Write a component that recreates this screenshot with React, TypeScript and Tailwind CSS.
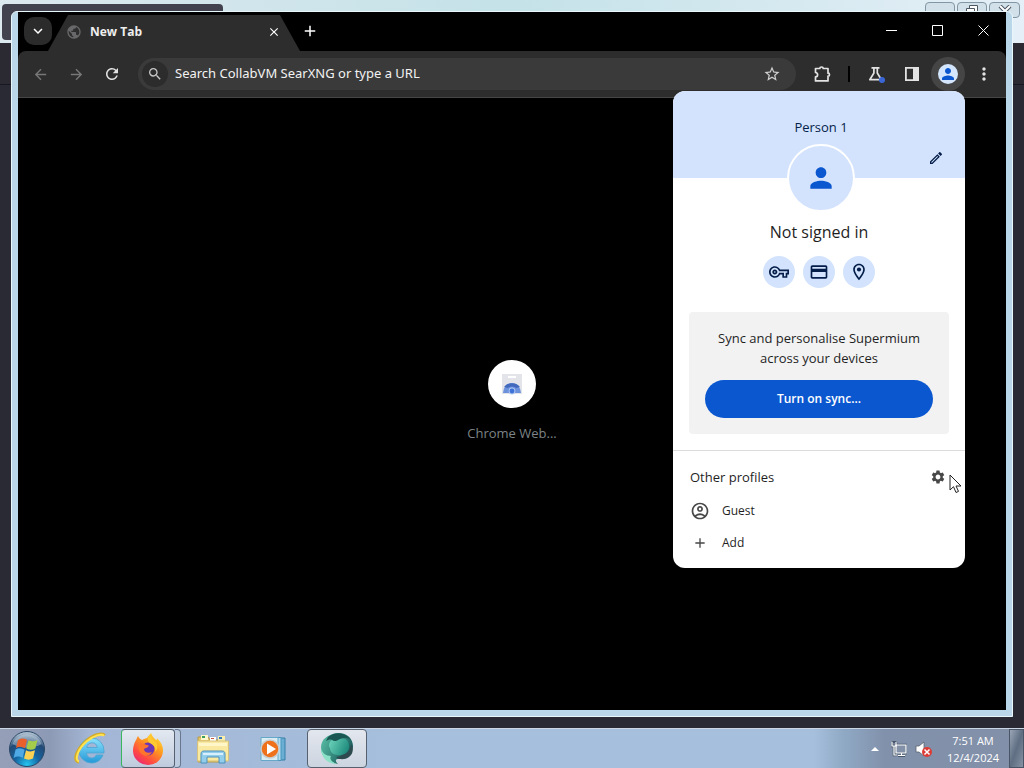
import type { ReactNode } from "react";
import {
  MdAdd,
  MdArrowBack,
  MdArrowForward,
  MdClose,
  MdKeyboardArrowDown,
  MdMoreVert,
  MdOutlineAccountCircle,
  MdOutlineCreditCard,
  MdOutlineEdit,
  MdOutlineLocationOn,
  MdOutlineVpnKey,
  MdPerson,
  MdPublic,
  MdRefresh,
  MdSearch,
  MdSettings,
  MdStarBorder,
} from "react-icons/md";

function ToolButton({ label, children }: { label: string; children: ReactNode }) {
  return (
    <button aria-label={label} className="flex h-9 w-9 shrink-0 items-center justify-center text-[18px] text-[#e3e3e3]">
      {children}
    </button>
  );
}

function CaptionButton({ label, children }: { label: string; children: ReactNode }) {
  return (
    <button aria-label={label} className="flex h-9 w-[46px] items-center justify-center">
      <svg viewBox="0 0 11 11" className="h-[11px] w-[11px]" fill="none" stroke="#fff" shapeRendering="geometricPrecision">
        {children}
      </svg>
    </button>
  );
}

function TabStrip() {
  return (
    <div className="flex h-[39px] items-center bg-black">
      <button aria-label="Search tabs" className="mb-px ml-1.5 flex h-7 w-7 items-center justify-center rounded-[10px] bg-[#2b2b2b] text-lg text-white">
        <MdKeyboardArrowDown />
      </button>
      <div className="-ml-1 flex h-full w-[252px] items-end pt-[3px]">
        <div className="flex h-9 w-full items-center bg-[#2d2d2d] pr-[19px] pb-0.5 pl-[18px] [clip-path:polygon(0_100%,20px_0,232px_0,100%_100%)]">
          <MdPublic className="h-4 w-4 text-[#68686a]" />
          <span className="ml-2 text-xs font-bold text-[#eeeeee]">New Tab</span>
          <button aria-label="Close tab" className="ml-auto text-sm text-white">
            <MdClose />
          </button>
        </div>
      </div>
      <button aria-label="New tab" className="mb-px ml-px text-lg text-white">
        <MdAdd />
      </button>
      <div className="mb-0.5 ml-auto flex">
        <CaptionButton label="Minimize">
          <path d="M0 5.5h11" />
        </CaptionButton>
        <CaptionButton label="Maximize">
          <path d="M.5.5h10v10H.5z" />
        </CaptionButton>
        <CaptionButton label="Close">
          <path d="m.5.5 10 10m0-10-10 10" />
        </CaptionButton>
      </div>
    </div>
  );
}

function Toolbar() {
  return (
    <div className="bg-black">
      <div className="flex h-[47px] items-center rounded-t-lg border-b border-[#464646] bg-[#2d2d2d] px-1">
        <div className="flex text-[#777777]">
          <button aria-label="Back" className="flex h-9 w-9 items-center justify-center text-[17px]">
            <MdArrowBack />
          </button>
          <button aria-label="Forward" className="flex h-9 w-9 items-center justify-center text-[17px]">
            <MdArrowForward />
          </button>
          <ToolButton label="Reload">
            <MdRefresh />
          </ToolButton>
        </div>
        <div className="mx-2 flex h-8 flex-1 items-center rounded-full bg-[#3a3a3a] pr-[15px] pl-1">
          <div className="flex h-[26px] w-[26px] items-center justify-center rounded-full bg-[#2c2c2c] text-base text-[#c7c7c7]">
            <MdSearch />
          </div>
          <input
            aria-label="Address and search bar"
            placeholder="Search CollabVM SearXNG or type a URL"
            className="ml-[7px] min-w-0 flex-1 bg-transparent font-['Noto_Sans',sans-serif] text-[13px] text-white outline-none placeholder:text-[#f2f2f2]"
          />
          <button aria-label="Bookmark this tab" className="text-[18px] text-[#d0d0d0]">
            <MdStarBorder />
          </button>
        </div>
        <ToolButton label="Extensions">
          <svg viewBox="0 0 18 18" className="h-[18px] w-[18px]" fill="none" stroke="#e3e3e3" strokeWidth="1.7" strokeLinejoin="round">
            <path d="M2.500 3.500h4.300a1.700 1.500 0 0 1 3.400 0h4.800v4.700a1.500 1.500 0 0 1 0 3v4.700H2.500v-4c2.800-.3 2.800-4.100 0-4.400z" />
          </svg>
        </ToolButton>
        <div className="flex w-[18px] justify-center">
          <div className="h-4 w-0.5 bg-black" />
        </div>
        <ToolButton label="Experiments">
          <span className="relative flex">
            <svg viewBox="0 0 18 18" className="h-[18px] w-[18px]" fill="none" stroke="#e3e3e3" strokeWidth="1.700" strokeLinejoin="round">
              <path d="M4.500 2.800h8M6.900 3v5L2.800 14.700h11.600L10.300 8V3" />
            </svg>
            <span className="absolute right-0 bottom-0 h-1.5 w-1.5 rounded-full bg-[#3a66d6]" />
          </span>
        </ToolButton>
        <ToolButton label="Side panel">
          <svg viewBox="0 0 16 16" className="h-4 w-4">
            <path d="M1.900 1.900h12.200v12.200H1.900z" fill="none" stroke="#e3e3e3" strokeWidth="1.800" />
            <path d="M9 2h5v12H9z" fill="#e3e3e3" />
          </svg>
        </ToolButton>
        <ToolButton label="Profile">
          <span className="flex h-[34px] w-[34px] items-center justify-center rounded-full bg-[#454545]">
            <span className="flex h-5 w-5 items-center justify-center rounded-full bg-[#d3e6fd] text-lg text-[#0b57d0]">
              <MdPerson />
            </span>
          </span>
        </ToolButton>
        <ToolButton label="Menu">
          <MdMoreVert className="h-5 w-5" />
        </ToolButton>
      </div>
    </div>
  );
}

function Feature({ children }: { children: ReactNode }) {
  return <span className="flex h-8 w-8 items-center justify-center rounded-full bg-[#d3e3fd] text-xl text-[#041e49]">{children}</span>;
}

function ProfileMenu() {
  return (
    <section className="absolute top-[91px] right-[59px] w-[292px] overflow-hidden rounded-xl bg-white text-[13px] text-[#1f1f1f]">
      <div className="relative h-[87px] bg-[#d3e3fd] pt-[26px] text-center text-[#041e49]">
        <p className="pl-1 leading-5">Person 1</p>
        <button aria-label="Edit profile" className="absolute right-[21px] bottom-3 text-base">
          <MdOutlineEdit />
        </button>
      </div>
      <div className="relative -mt-[34px] ml-1 flex justify-center">
        <span className="flex h-[68px] w-[68px] items-center justify-center rounded-full border-2 border-white bg-[#d3e3fd] text-[32px] text-[#0b57d0]">
          <MdPerson />
        </span>
      </div>
      <h2 className="mt-2 text-center text-base leading-6">Not signed in</h2>
      <div className="mt-3 flex justify-center gap-2">
        <Feature>
          <MdOutlineVpnKey />
        </Feature>
        <Feature>
          <MdOutlineCreditCard />
        </Feature>
        <Feature>
          <MdOutlineLocationOn />
        </Feature>
      </div>
      <div className="mx-4 mt-6 rounded bg-[#f2f2f2] p-4 text-center">
        <p className="px-2 leading-5">Sync and personalise Supermium across your devices</p>
        <button className="mt-3 h-[38px] w-full rounded-full bg-[#0b57d0] text-xs font-semibold text-white">Turn on sync...</button>
      </div>
      <div className="mt-4 border-t border-[#dcdcdc] pt-4 pb-[9px]">
        <div className="mb-2 flex items-center justify-between pr-[19px] pl-[17px] leading-5">
          <h3>Other profiles</h3>
          <button aria-label="Manage profiles" className="text-base text-[#474747]">
            <MdSettings />
          </button>
        </div>
        <button className="flex h-8 w-full items-center gap-3 pl-[17px] text-xs">
          <MdOutlineAccountCircle className="h-5 w-5 text-[#474747]" />
          Guest
        </button>
        <button className="flex h-8 w-full items-center gap-3 pl-[17px] text-xs">
          <MdAdd className="h-5 w-5 p-0.5 text-[#474747]" />
          Add
        </button>
      </div>
    </section>
  );
}

function BrowserWindow() {
  return (
    <section className="absolute inset-x-[11px] top-[11px] bottom-[11px] flex flex-col rounded-t-md border border-[#e9f6fb] bg-[#b9d7e8] px-1.5 pb-1.5">
      <div className="flex flex-1 flex-col bg-black">
        <TabStrip />
        <Toolbar />
        <main className="flex flex-1 flex-col items-center justify-center pb-1.5">
          <a href="#" className="flex flex-col items-center text-[13px] text-[#7d8386]">
            <span className="flex h-12 w-12 items-center justify-center rounded-full bg-white">
              <svg viewBox="0 0 22 22" className="h-[22px] w-[22px]">
                <path d="M1 1h20v20H1z" fill="#e3e4e9" />
                <path d="M7 3h8v2H7z" fill="#fff" />
                <path d="M2 20a9 10 0 0 1 18 0z" fill="#6c92dc" />
                <path d="M3 14a9 7 0 0 1 16 0l-4 1a5 4 0 0 0-8 0z" fill="#4169bd" />
                <circle cx="11" cy="18" r="3.4" fill="#a9c3f2" />
                <circle cx="11" cy="18" r="2.4" fill="#3d72d6" />
              </svg>
            </span>
            <span className="mt-[15px] leading-5">Chrome Web...</span>
          </a>
        </main>
      </div>
    </section>
  );
}

function BackgroundWindow() {
  return (
    <div className="flex flex-1 flex-col bg-[#292a33]">
      <div className="flex h-[43px] items-start justify-between bg-linear-to-r from-[#dce9ef] via-[#c4e2e8] to-[#e5eff7] pt-1 pr-1 pl-0.5">
        <div className="h-9 w-[221px] rounded bg-[#42424e]" />
        <div className="-mt-0.5 flex gap-0.5">
          <button aria-label="Minimize background window" className="h-4 w-[30px] rounded-sm border border-[#8296a3] bg-[#d1e0e9]" />
          <button aria-label="Restore background window" className="flex h-4 w-[30px] justify-center rounded-sm border border-[#8296a3] bg-[#d1e0e9]">
            <svg viewBox="0 0 12 12" className="mt-0.5 h-3 w-3" fill="#fff" stroke="#4c5864">
              <path d="M3.500.5h8v7h-8z" />
              <path d="M.5 3.500h8v7h-8z" />
            </svg>
          </button>
          <button aria-label="Close background window" className="flex h-4 w-[31px] justify-center rounded-sm border border-[#8296a3] bg-[#d1e0e9]">
            <svg viewBox="0 0 14 12" className="mt-0.5 h-3 w-3.5" fill="none">
              <path d="m2 1 10 10m0-10L2 11" stroke="#465363" strokeWidth="4" />
              <path d="m2 1 10 10m0-10L2 11" stroke="#fff" strokeWidth="2" />
            </svg>
          </button>
        </div>
      </div>
      <div className="h-[42px] border-b border-[#17181f] bg-[#2b2a33]" />
    </div>
  );
}

function StartOrb() {
  return (
    <svg viewBox="0 0 38 38" className="h-[38px] w-[38px]">
      <defs>
        <radialGradient id="orb" cx=".5" cy=".95" r=".9">
          <stop offset="0" stopColor="#25c6f0" />
          <stop offset=".4" stopColor="#1464a2" />
          <stop offset=".75" stopColor="#234a75" />
          <stop offset="1" stopColor="#aabdce" />
        </radialGradient>
      </defs>
      <circle cx="19" cy="19" r="17.5" fill="url(#orb)" stroke="#2a4868" />
      <path d="M4.500 14a15 13 0 0 1 29 0c-9 5-19 5-29 0z" fill="#d9e5ee" opacity=".4" />
      <path d="M10 10c3-2.200 6-2 9-.2l-2 8.400c-3-2-6-2-9-.2z" fill="#e8612c" />
      <path d="M20.500 10.200c3 1.600 6 1.500 9-.2l-2.200 8.600c-3 1.700-6 1.600-9-.1z" fill="#a3cd4b" />
      <path d="M7.600 19.400c3-1.700 6-1.600 9 .3l-2 8.200c-3-1.800-6-1.700-9 0z" fill="#4fa9e4" />
      <path d="M18 20.300c3 1.600 6 1.500 9 0l-2 8.200c-3 1.600-6 1.500-9 0z" fill="#fbd154" />
    </svg>
  );
}

function ExplorerLogo() {
  return (
    <svg viewBox="0 0 34 34" className="h-[34px] w-[34px]" fill="none">
      <defs>
        <linearGradient id="ie" x1="0" y1="0" x2="0" y2="1">
          <stop offset="0" stopColor="#8be1fb" />
          <stop offset="1" stopColor="#2499d8" />
        </linearGradient>
      </defs>
      <path d="M30 23c-2 5-6 8-11.500 8A12.500 12.500 0 1 1 31 18.500V21H13.500c.3 3.300 2.300 5 5.300 5 2 0 3.500-1 4.400-3zM13.700 15.500h10.500c-.3-3-2.200-4.700-5.100-4.700-3.100 0-5 1.700-5.400 4.700z" fill="url(#ie)" stroke="#4aa5d2" strokeWidth=".8" fillRule="evenodd" />
      <path d="M6 30C-1 29 4 17 13 9 21 2 30 .5 31.500 3.500" stroke="#d3ab2c" strokeWidth="3" />
      <path d="M6 29.500C1 28 5 17 13.500 9.500 21 3 29 1.500 31 3.800" stroke="#ffe34f" strokeWidth="2" />
    </svg>
  );
}

function FirefoxLogo() {
  return (
    <svg viewBox="0 0 34 34" className="h-[34px] w-[34px]">
      <defs>
        <linearGradient id="fox" x1=".9" y1="0" x2=".2" y2="1">
          <stop offset="0" stopColor="#ffeb3e" />
          <stop offset=".4" stopColor="#ff9a1f" />
          <stop offset=".75" stopColor="#ff4a42" />
          <stop offset="1" stopColor="#e8257b" />
        </linearGradient>
      </defs>
      <path d="M5 8c1-1 1-3 2-4 1 2 2 3 4 4 2-1 4-2 5-2 1-2 3-3 4-5 1 3 3 5 5 7 1 0 1-1 1-2 4 4 6 8 6 12a15 14.500 0 0 1-30 1c0-4 1-8 3-11z" fill="url(#fox)" />
      <circle cx="17" cy="17" r="6.500" fill="#6b35b5" />
      <path d="M8 12c3-1 5 0 8 1 2 0 2 1 1 2s-3 1-4 2c0 3 4 5 8 3-2 4-7 5-10 2-3-2-4-6-3-10z" fill="#ff752d" />
      <path d="M17 5c-1 5 2 6 5 8 2 2 3 4 2 7 3-3 3-7 1-10-3-2-5-3-5-8z" fill="#ffca31" />
    </svg>
  );
}

function FolderLogo() {
  return (
    <svg viewBox="0 0 34 32" className="h-8 w-[34px]">
      <path d="M2 4h10l2 3h15v22H2z" fill="#e5c766" stroke="#b99a43" />
      <path d="M5 2h7v5H5z" fill="#fff7cc" />
      <path d="M6 3h3v2H6z" fill="#3a9e5f" />
      <path d="M14 4h6v4h-6z" fill="#fff" />
      <path d="M15 5h3v1h-3z" fill="#cc5638" />
      <path d="M22 3h7v6h-7z" fill="#f8edaa" />
      <path d="M23 4h3v2h-3z" fill="#347dbe" />
      <path d="M1.500 8h31v20h-31z" fill="#fae9a0" stroke="#d6c27e" />
      <path d="M3 10h28v3H3z" fill="#fff6ca" />
      <path d="M5 30V21c0-2 1-3 3-3h18c2 0 3 1 3 3v9h-6v-6H11v6z" fill="#93cdec" stroke="#4c91bd" />
      <path d="M7 20h20v2H7z" fill="#d7f0fc" />
    </svg>
  );
}

function MediaLogo() {
  return (
    <svg viewBox="0 0 30 26" className="h-[26px] w-[30px]">
      <path d="M10 2h17v22H10z" fill="#6aaed4" stroke="#377fa8" />
      <path d="M6 1.500h17v23H6z" fill="#b3dcef" stroke="#4b96bd" />
      <path d="M3 1.500h17v23H3z" fill="#d9edf5" stroke="#67a8c8" />
      <circle cx="12" cy="13" r="9" fill="#ee711c" stroke="#c8cdd0" strokeWidth="1.500" />
      <path d="m9 7.500 9 5.500-9 5.500z" fill="#fff" />
    </svg>
  );
}

function SupermiumLogo() {
  return (
    <svg viewBox="0 0 34 34" className="h-[34px] w-[34px]">
      <defs>
        <linearGradient id="sm" x1="0" y1="0" x2="1" y2=".5">
          <stop offset="0" stopColor="#5cc5aa" />
          <stop offset="1" stopColor="#1a5c5c" />
        </linearGradient>
        <linearGradient id="smFace" x1="0" y1="0" x2="1" y2=".4">
          <stop offset="0" stopColor="#6fd6bd" />
          <stop offset="1" stopColor="#238f80" />
        </linearGradient>
      </defs>
      <path d="M17 1c9-1 16 5 16 13s-6 14-14 13c-4 0-4 2-1 5C9 31 1 25 1 16S7 3 17 1z" fill="url(#sm)" />
      <path d="M8 5C14-1 26 0 31 8c-4-3-8-3-12 0-3 2-6 2-7 0-2-1-4 0-6 1z" fill="#1a5752" />
      <path d="M12 8c2 2 5 1 8-1 5-2 9 1 9 7s-5 10-11 9c-5 0-8-3-8-7-2-2-1-6 2-8z" fill="url(#smFace)" />
      <path d="M1 16c1 5 5 8 10 8-2 3 1 6 6 8C7 32 1 25 1 16z" fill="#8ce0c6" />
      <path d="M22 23c5-1 8-4 9-11 3 5 2 10-2 13s-10 3-13 0c2 0 4-1 6-2z" fill="#2e4a4f" />
    </svg>
  );
}

function Taskbar() {
  return (
    <footer className="flex h-10 items-stretch border-t border-[#cbd6e4] bg-[linear-gradient(90deg,#969fb8_0,#8d9ab5_50px,#a3b6d5_90px,#a5bfdc_400px,#a5bfdc_calc(100%-210px),#8fa9c5_calc(100%-180px),#8291ab_calc(100%-140px),#8290a8_100%)] text-white">
      <button aria-label="Start" className="flex w-[54px] items-center justify-center">
        <StartOrb />
      </button>
      <button aria-label="Internet Explorer" className="ml-1 flex w-[63px] items-center justify-center">
        <ExplorerLogo />
      </button>
      <button aria-label="Firefox" className="flex w-[54px] items-center justify-center rounded-sm border border-[#56606e] border-l-[#38b75d] bg-linear-to-b from-[#e3e9f1] to-[#bfcbdd]">
        <FirefoxLogo />
      </button>
      <span className="w-1.5 rounded-r-sm border border-l-0 border-[#68778b] bg-[#bdcbe0]" />
      <button aria-label="File Explorer" className="ml-0.5 flex w-[60px] items-center justify-center">
        <FolderLogo />
      </button>
      <button aria-label="Media Player" className="flex w-[60px] items-center justify-center">
        <MediaLogo />
      </button>
      <button aria-label="Supermium" className="ml-1 flex w-[60px] items-center justify-center rounded-sm border border-[#56606e] bg-linear-to-b from-[#e3e7ee] to-[#ccd4e0]">
        <SupermiumLogo />
      </button>
      <div className="ml-auto flex items-center">
        <button aria-label="Show hidden icons" className="mr-3 flex">
          <svg viewBox="0 0 8 4" className="h-1 w-2" fill="#fff">
            <path d="m4 0 4 4H0z" />
          </svg>
        </button>
        <svg viewBox="0 0 16 16" className="h-4 w-4" fill="none" stroke="#fff" strokeWidth="1.200">
          <path d="M5 4h10v8H5zM7 15h7M10.500 12v3M1 1v4h4V1M3 5v9h3M2.500 0v2M4 0v2" stroke="#47566a" strokeWidth="2.500" />
          <path d="M5 4h10v8H5z" fill="#8290a8" />
          <path d="M7 14.500h7M10.500 12v3M1 1v4h4V1M3 5v9h3" />
        </svg>
        <svg viewBox="0 0 18 18" className="ml-2 h-[18px] w-[18px]">
          <path d="M1 6h3l5-4v14l-5-4H1z" fill="#fff" stroke="#58636f" strokeWidth=".8" />
          <circle cx="12" cy="12" r="5" fill="#dc3c35" />
          <path d="m9.500 9.500 5 5m0-5-5 5" stroke="#fff" strokeWidth="1.500" />
        </svg>
        <div className="ml-1 w-[72px] text-center text-[11px] leading-[17px]">
          <p>7:51 AM</p>
          <p>12/4/2024</p>
        </div>
        <button aria-label="Show desktop" className="h-full w-[15px] border border-[#495566] bg-linear-to-br from-[#9aa6b7] via-[#5f6e82] to-[#8793a5]" />
      </div>
    </footer>
  );
}

export default function App() {
  return (
    <div className="flex min-h-screen flex-col font-['Open_Sans',sans-serif]">
      <div className="relative flex flex-1 flex-col">
        <BackgroundWindow />
        <BrowserWindow />
        <ProfileMenu />
        <svg viewBox="0 0 13 20" className="absolute top-[474px] right-[62px] h-5 w-[13px]">
          <path d="M1 1v15l3.500-3.300L7 18.500l2.500-1.100L7 12h5z" fill="#fff" stroke="#222" />
        </svg>
      </div>
      <Taskbar />
    </div>
  );
}
